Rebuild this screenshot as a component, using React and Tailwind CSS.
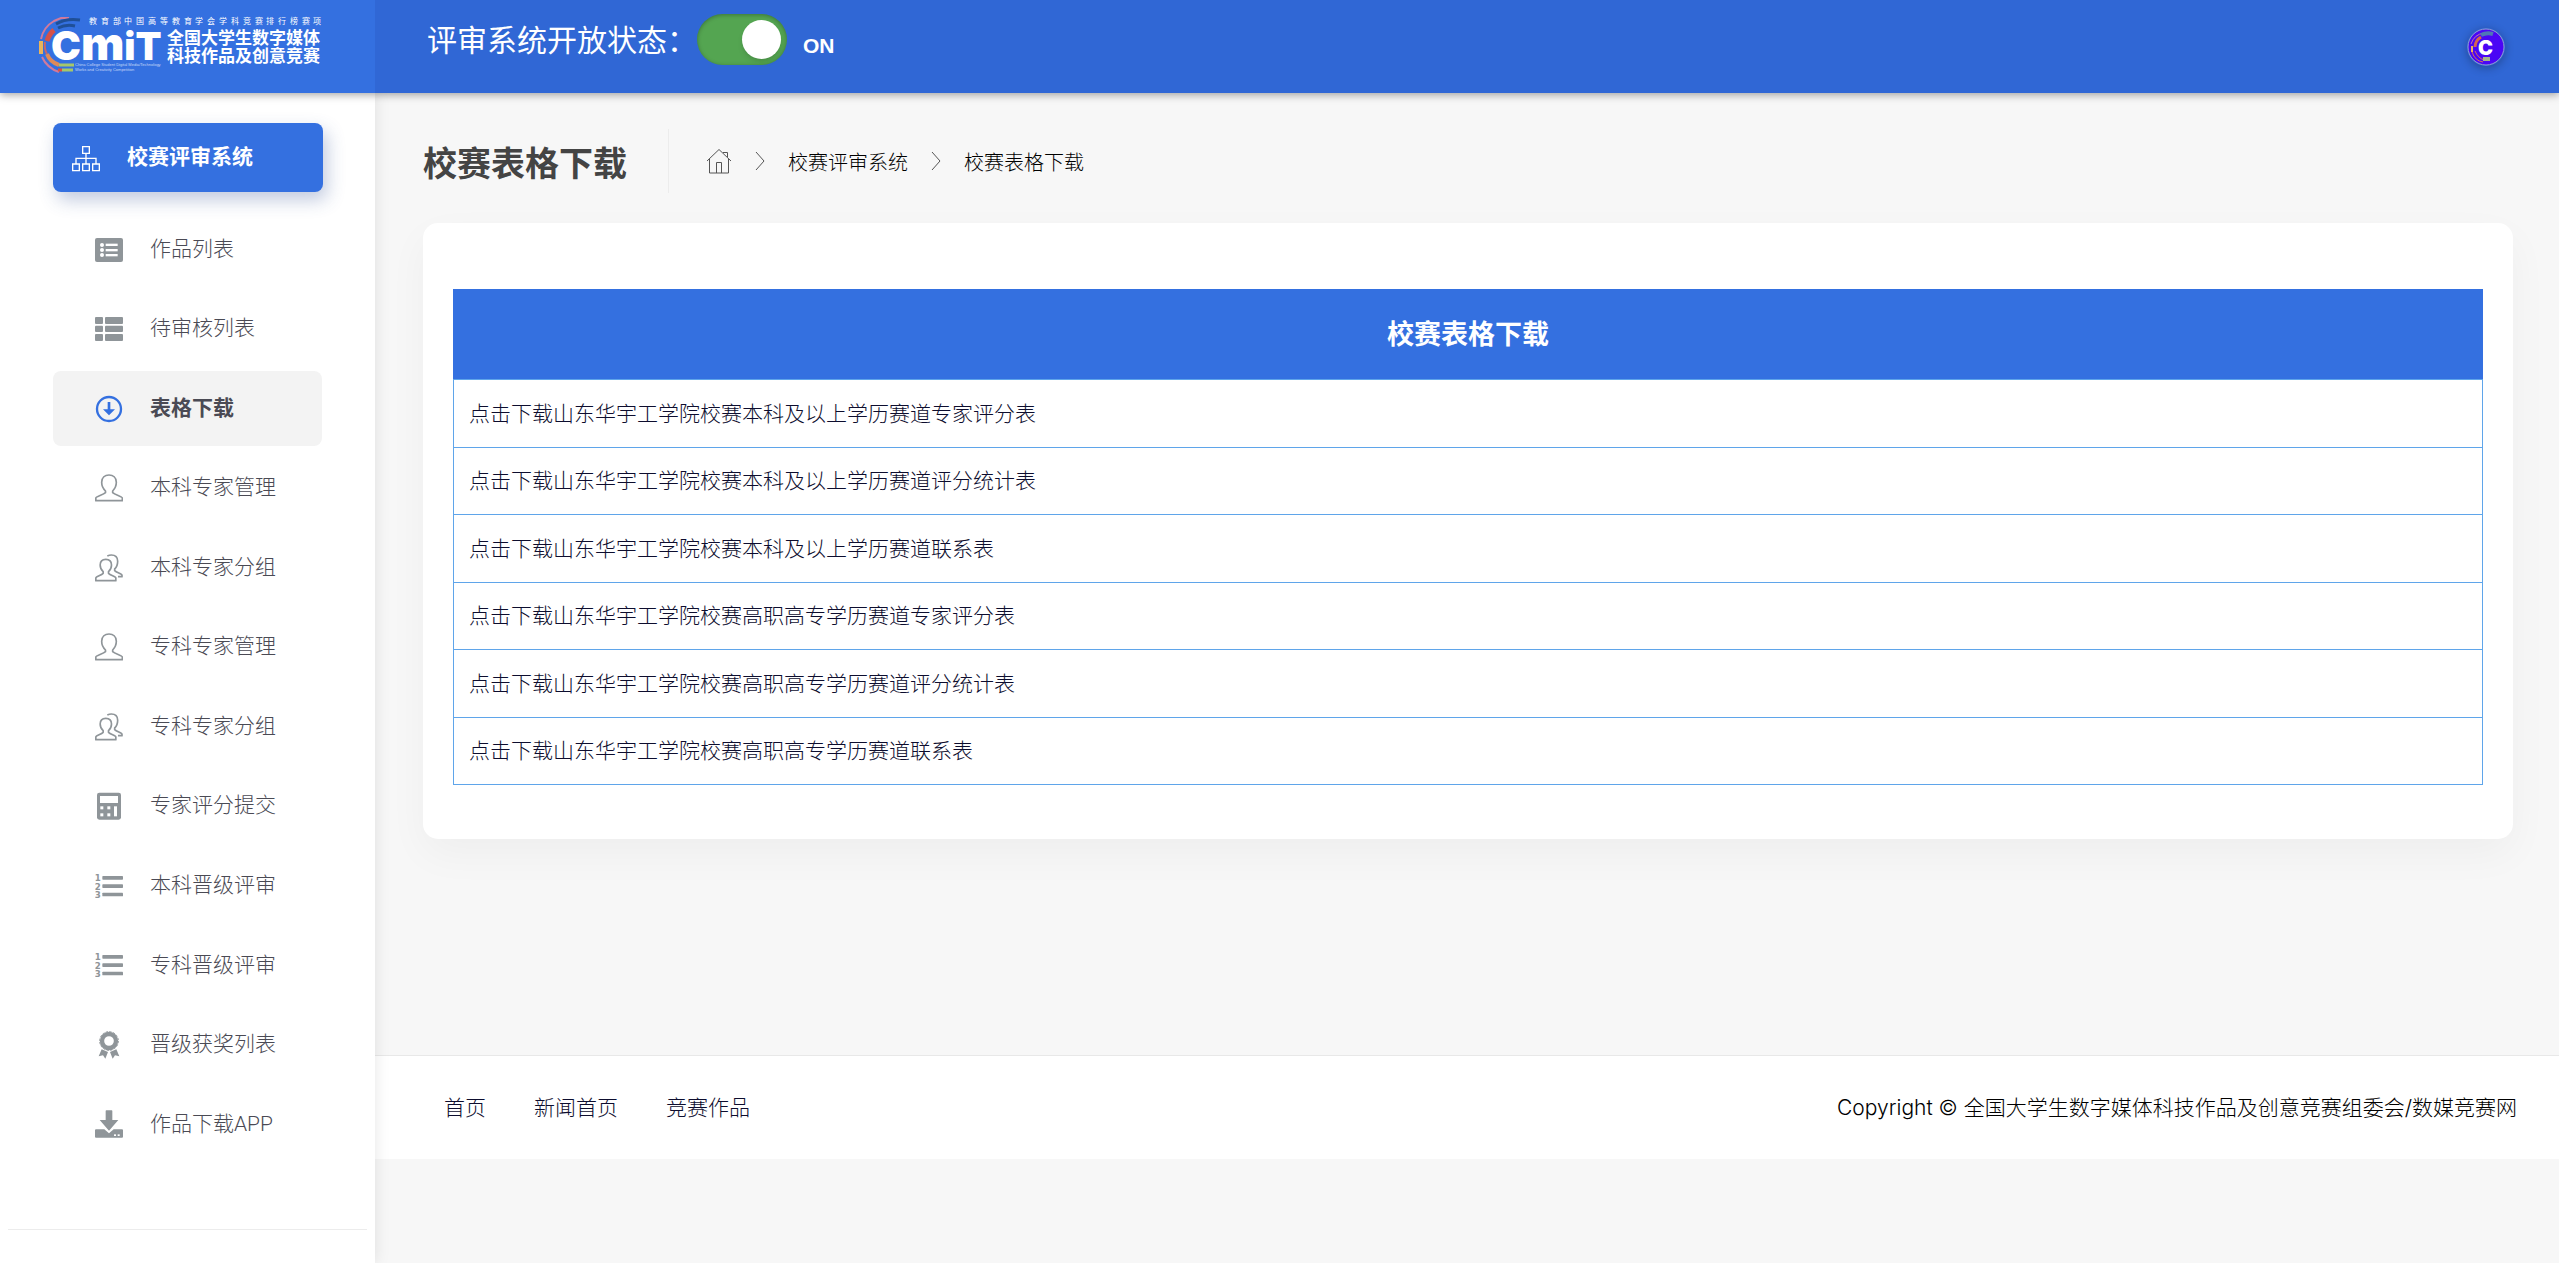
import React, { useState } from 'react';

const menuItems = [
  { label: '作品列表', icon: 'listBox' },
  { label: '待审核列表', icon: 'thList' },
  { label: '表格下载', icon: 'circleDown' },
  { label: '本科专家管理', icon: 'user' },
  { label: '本科专家分组', icon: 'users' },
  { label: '专科专家管理', icon: 'user' },
  { label: '专科专家分组', icon: 'users' },
  { label: '专家评分提交', icon: 'calculator' },
  { label: '本科晋级评审', icon: 'numbered' },
  { label: '专科晋级评审', icon: 'numbered' },
  { label: '晋级获奖列表', icon: 'award' },
  { label: '作品下载APP', icon: 'download' },
];

const downloads = [
  '点击下载山东华宇工学院校赛本科及以上学历赛道专家评分表',
  '点击下载山东华宇工学院校赛本科及以上学历赛道评分统计表',
  '点击下载山东华宇工学院校赛本科及以上学历赛道联系表',
  '点击下载山东华宇工学院校赛高职高专学历赛道专家评分表',
  '点击下载山东华宇工学院校赛高职高专学历赛道评分统计表',
  '点击下载山东华宇工学院校赛高职高专学历赛道联系表',
];

const footerLinks = ['首页', '新闻首页', '竞赛作品'];

// All menu icons are drawn on an 84 x 84 grid
const iconShapes = {
  listBox: (
    <>
      <rect y="6" width="84" height="72" rx="6" fill="currentColor" />
      <g fill="#fff">
        <circle cx="21" cy="27" r="6" />
        <circle cx="21" cy="42" r="6" />
        <circle cx="21" cy="57" r="6" />
        <rect x="32" y="23" width="36" height="7" />
        <rect x="32" y="39" width="36" height="7" />
        <rect x="32" y="54" width="36" height="7" />
      </g>
    </>
  ),
  thList: (
    <g fill="currentColor">
      <rect y="6" width="24" height="21" rx="3" />
      <rect x="30" y="6" width="54" height="21" rx="3" />
      <rect y="32" width="24" height="19" rx="3" />
      <rect x="30" y="32" width="54" height="19" rx="3" />
      <rect y="57" width="24" height="21" rx="3" />
      <rect x="30" y="57" width="54" height="21" rx="3" />
    </g>
  ),
  circleDown: (
    <>
      <circle cx="42" cy="42" r="36" fill="none" stroke="currentColor" strokeWidth="7" />
      <path d="M38 21h8v22h14L42 61 24 43h14z" fill="currentColor" />
    </>
  ),
  user: (
    <path
      d="M2.500 80v-8c0-5 22-9 29-16v-5C24 44 20 36 20 25 20 10 30 3 42 3s22 7 22 22c0 11-4 19-11 26v5c7 7 29 11 29 16v8z"
      fill="none"
      stroke="currentColor"
      strokeWidth="5"
      strokeLinejoin="round"
    />
  ),
  users: (
    <g fill="none" stroke="currentColor" strokeWidth="5" strokeLinejoin="round">
      <path d="M2.500 80v-8c0-4 16-8 22-14v-5c-7-6-9-12-9-20 0-12 7-17 17-17s17 5 17 17c0 8-2 14-9 20v5c6 6 22 10 22 14v8z" />
      <path d="M37 6c4-2 8-3 12-3 13 0 19 7 19 19 0 11-2 17-9 23v5c6 6 22 10 22 14v4H69" />
    </g>
  ),
  calculator: (
    <>
      <rect x="6" y="2" width="72" height="81" rx="7" fill="currentColor" />
      <g fill="#fff">
        <rect x="15" y="12" width="54" height="21" />
        <rect x="16" y="43" width="9" height="9" />
        <rect x="37" y="43" width="9" height="9" />
        <rect x="16" y="64" width="9" height="9" />
        <rect x="37" y="64" width="9" height="9" />
        <rect x="57" y="43" width="9" height="30" />
      </g>
    </>
  ),
  numbered: (
    <g fill="currentColor">
      <rect x="22" y="12" width="62" height="11" rx="2" />
      <rect x="22" y="37" width="62" height="11" rx="2" />
      <rect x="22" y="62" width="62" height="11" rx="2" />
      <g fontFamily="DejaVu Sans" fontWeight="700" fontSize="26">
        <text x="-1" y="27">1</text>
        <text x="-1" y="53">2</text>
        <text x="-1" y="79">3</text>
      </g>
    </g>
  ),
  award: (
    <>
      <circle cx="42" cy="30" r="21" fill="none" stroke="currentColor" strokeWidth="13" />
      <circle cx="42" cy="30" r="28" fill="none" stroke="currentColor" strokeWidth="3" strokeDasharray="7 4" />
      <path d="M20 55l19 8-8 20-7-10-13 3zM64 55l-19 8 8 20 7-10 13 3z" fill="currentColor" />
    </>
  ),
  download: (
    <g fill="currentColor">
      <path d="M34 1h16a2 2 0 0 1 2 2v27h18L42 62 14 30h18V3a2 2 0 0 1 2-2z" />
      <path d="M3 58h25l14 12 14-12h25q3 0 3 3v19q0 3-3 3H3q-3 0-3-3V61q0-3 3-3z" />
      <rect x="57" y="73" width="6" height="5" fill="#fff" />
      <rect x="68" y="73" width="6" height="5" fill="#fff" />
    </g>
  ),
};

function MenuIcon({ name }) {
  return (
    <svg viewBox="0 0 84 84" className="h-7 w-7 shrink-0" aria-hidden="true">
      {iconShapes[name]}
    </svg>
  );
}

function Logo() {
  return (
    <svg viewBox="0 0 284 60" className="h-[60px] w-[284px]" role="img" aria-label="CMIT">
      <g fill="none">
        <path d="M3 24A27 27 0 0 1 16 6l7-3h8" stroke="#d07a9c" strokeWidth="2" />
        <path d="M18 9q10-6 24-4M20 13q8-4 17-2" stroke="#1f4f97" strokeWidth="3" />
        <path d="M9 26A22 22 0 0 1 16 15" stroke="#d4524a" strokeWidth="5" />
        <path d="M3 26v13" stroke="#e9b45c" strokeWidth="4" />
        <path d="M7 27q-1 7 2 12" stroke="#c5666c" strokeWidth="2" />
        <path d="M9 39q3 8 12 11" stroke="#e08a58" strokeWidth="4" />
        <path d="M4 42q5 11 17 15" stroke="#d07a9c" strokeWidth="2" />
        <path d="M21 50h15M24 55h11" stroke="#a5c76a" strokeWidth="3" />
        <path d="M20 55h4" stroke="#e0503f" strokeWidth="3" />
      </g>
      <text x="13" y="45" fill="#fff" fontFamily="Inter" fontWeight="900" fontSize="38">
        <tspan fontSize="40">C</tspan>
        <tspan fontSize="46">m</tspan>
        <tspan>iT</tspan>
      </text>
      <g fill="#c5d7f7" fontFamily="Liberation Sans" fontSize="4">
        <text x="37" y="51">China College Student Digital Media/Technology</text>
        <text x="37" y="56">Works and Creativity Competition</text>
      </g>
      <g fill="#fff" fontFamily="Noto Sans CJK SC">
        <text x="51 63 75 86 98 110 122 134 146 157 169 181 193 205 217 228 240 252 264 275" y="9" fontSize="8">
          教育部中国高等教育学会学科竞赛排行榜赛项
        </text>
        <text x="129" y="29" fontSize="17" fontWeight="700">全国大学生数字媒体</text>
        <text x="129" y="47" fontSize="17" fontWeight="700">科技作品及创意竞赛</text>
      </g>
    </svg>
  );
}

function Chevron() {
  return (
    <svg viewBox="0 0 10 20" className="h-5 w-[10px]" fill="none" stroke="#555" aria-hidden="true">
      <path d="M1 1l8 9-8 9" />
    </svg>
  );
}

function Header() {
  const [open, setOpen] = useState(true);

  return (
    <header className="relative z-20 flex h-[93px] bg-[#3067d5] text-white shadow-[0_2px_8px_rgba(0,0,0,0.35)]">
      <a href="#" className="w-[375px] shrink-0 bg-[#3470e0] pt-[15px] pl-[38px]">
        <Logo />
      </a>
      <div className="flex flex-1 items-start justify-between pt-[14px] pr-[54px] pl-[52px]">
        <div className="flex items-center">
          <label htmlFor="review-open" className="text-[30px] leading-[51px]">
            评审系统开放状态：
          </label>
          <input
            id="review-open"
            type="checkbox"
            checked={open}
            onChange={(e) => setOpen(e.target.checked)}
            className="h-[51px] w-[90px] appearance-none rounded-full bg-gray-400 p-[6px] shadow-[inset_0_1px_4px_rgba(0,0,0,0.3)] before:block before:h-[39px] before:w-[39px] before:rounded-full before:bg-white before:shadow-md checked:bg-[#54a551] checked:before:ml-[39px]"
          />
          <span className="pt-3 pl-4 font-['Liberation_Sans'] text-[21px] font-bold">
            {open ? 'ON' : 'OFF'}
          </span>
        </div>
        <button
          type="button"
          aria-label="用户"
          className="mt-[14px] rounded-full shadow-[0_2px_10px_rgba(0,0,0,0.3)]"
        >
          <svg viewBox="0 0 38 38" className="h-[38px] w-[38px]">
            <circle cx="19" cy="19" r="18" fill="#4a06f5" stroke="#8f9fd0" strokeWidth="1" />
            <g fill="none">
              <path d="M4 16A16 16 0 0 1 17 5" stroke="#c7759f" strokeWidth="1" />
              <path d="M8 19a12 12 0 0 1 6-10" stroke="#d4654f" strokeWidth="3" />
              <path d="M14 7q6-3 12-1" stroke="#4f78b5" strokeWidth="4" />
              <path d="M5 18v6" stroke="#e9b45c" strokeWidth="2" />
              <path d="M8 23q3 7 9 9M5 24q3 9 11 10" stroke="#d8705a" strokeWidth="1" />
              <path d="M16 31h7" stroke="#a5b48a" strokeWidth="4" />
            </g>
            <text x="11" y="27" fontSize="20" fontWeight="900" fontFamily="Inter" fill="#fff">C</text>
          </svg>
        </button>
      </div>
    </header>
  );
}

function Sidebar() {
  const [active, setActive] = useState('表格下载');

  return (
    <aside className="relative z-10 flex w-[375px] shrink-0 flex-col bg-white pt-[30px] font-[Roboto,'Noto_Sans_CJK_SC',sans-serif] shadow-[0_0_15px_rgba(0,0,0,0.1)]">
      <button
        type="button"
        className="mx-[53px] flex h-[69px] w-[270px] items-center rounded-lg bg-[#3470e0] pl-[19px] text-[21px] font-bold text-white shadow-[4px_8px_18px_rgba(50,80,150,0.3)]"
      >
        <svg viewBox="0 0 84 84" className="h-7 w-7" fill="none" stroke="currentColor" strokeWidth="4" aria-hidden="true">
          <path d="M32 8h20v20H32zM2 60h20v20H2zM32 60h20v20H32zM62 60h20v20H62zM42 28v32M12 60V43h60v17" />
        </svg>
        <span className="pl-[27px]">校赛评审系统</span>
      </button>
      <ul className="mx-[53px] mt-5 flex flex-1 flex-col justify-between">
        {menuItems.map((item) => {
          const isActive = item.label === active;
          return (
            <li key={item.label}>
              <a
                href="#"
                onClick={() => setActive(item.label)}
                className={`flex h-[75px] items-center gap-[27px] rounded-lg pl-[42px] text-[21px] text-[#4a4a54] ${
                  isActive ? 'bg-[#f3f3f3] font-bold' : 'font-light'
                }`}
              >
                <span className={isActive ? 'text-[#3470e0]' : 'text-[#8f9599]'}>
                  <MenuIcon name={item.icon} />
                </span>
                {item.label}
              </a>
            </li>
          );
        })}
      </ul>
      <hr className="mx-2 mt-[67px] mb-[33px] border-[#ececec]" />
    </aside>
  );
}

function PageTitle() {
  return (
    <div className="flex h-16 items-center">
      <h1 className="pt-1 text-[34px] font-bold text-[#444]">校赛表格下载</h1>
      <nav className="ml-[41px] flex h-16 items-center border-l border-[#ececec] pl-[37px] text-[20px] font-light text-black">
        <a href="#" aria-label="首页">
          <svg viewBox="0 0 26 26" className="h-[26px] w-[26px]" fill="none" stroke="#555" aria-hidden="true">
            <path d="M1 13L13 1.500l12 11.500M3.500 11v14h19V11M10.500 25V14.500h5V25M17 4.500h4.500V9" />
          </svg>
        </a>
        <span className="px-[23px]"><Chevron /></span>
        <a href="#" className="pt-1">校赛评审系统</a>
        <span className="px-[23px]"><Chevron /></span>
        <span className="pt-1">校赛表格下载</span>
      </nav>
    </div>
  );
}

function DownloadTable() {
  return (
    <section className="mt-[30px] rounded-[15px] bg-white px-[30px] pt-[66px] pb-[54px] shadow-[0_15px_40px_rgba(0,0,0,0.04)]">
      <table className="h-[496px] w-full border-collapse text-[21px]">
        <thead>
          <tr className="h-[90px] bg-[#3470e0]">
            <th className="border border-[#3470e0] border-b-[#5fa5ea] text-[27px] font-bold text-white">
              校赛表格下载
            </th>
          </tr>
        </thead>
        <tbody>
          {downloads.map((name) => (
            <tr key={name}>
              <td className="border border-[#5fa5ea] px-[15px] font-light text-[#0d0d2e]">
                <a href="#">{name}</a>
              </td>
            </tr>
          ))}
        </tbody>
      </table>
    </section>
  );
}

function Footer() {
  return (
    <footer className="mb-[104px] flex h-[104px] items-center justify-between border-t border-[#e8e8e8] bg-white pr-[42px] pl-[69px] font-[Inter,'Noto_Sans_CJK_SC',sans-serif] text-[21px] font-light">
      <nav className="flex gap-[48px] text-[#0d0d2e]">
        {footerLinks.map((link) => (
          <a key={link} href="#">{link}</a>
        ))}
      </nav>
      <p className="text-black">Copyright © 全国大学生数字媒体科技作品及创意竞赛组委会/数媒竞赛网</p>
    </footer>
  );
}

function App() {
  return (
    <div className="flex min-h-screen flex-col bg-[#f7f7f7] font-['Open_Sans','Noto_Sans_CJK_SC',sans-serif]">
      <Header />
      <div className="flex flex-1">
        <Sidebar />
        <main className="flex flex-1 flex-col">
          <div className="flex-1 pt-[36px] pr-[46px] pl-[48px]">
            <PageTitle />
            <DownloadTable />
          </div>
          <Footer />
        </main>
      </div>
    </div>
  );
}

export default App;
